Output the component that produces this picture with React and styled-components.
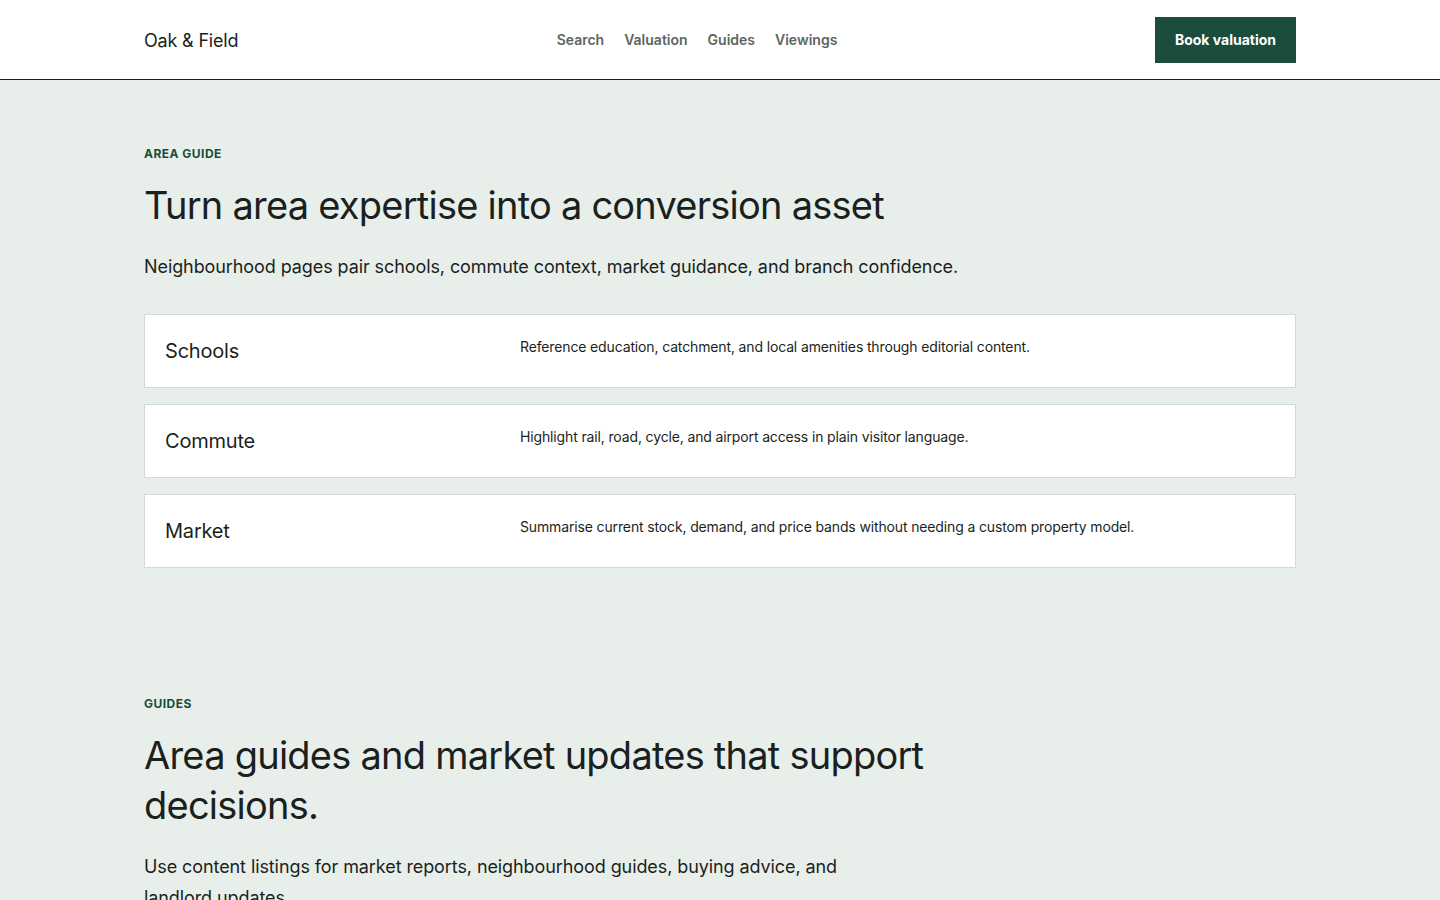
import React from "react";
import styled, { createGlobalStyle } from "styled-components";

const Global = createGlobalStyle`
  body { margin: 0; font-family: Inter, "Noto Sans", sans-serif; background: #e8efeb; color: #1b1f1d; }
`;
const Header = styled.header`
  background: #fff; border-bottom: 1px solid #1b1f1d; height: 79px;
`;
const Wrap = styled.div`
  width: 1152px; margin: 0 auto; box-sizing: border-box;
`;
const HeaderInner = styled(Wrap)`
  height: 100%; display: grid; grid-template-columns: 1fr auto 1fr; align-items: center;
`;
const Logo = styled.div` font-size: 18px; color: #1b1f1d; letter-spacing: -0.01em; margin-top: 2px; `;
const Nav = styled.nav` display: flex; gap: 20px; margin-right: 46px; `;
const NavLink = styled.a`
  font-size: 14px; font-weight: 600; color: #5d6661; text-decoration: none;
`;
const Button = styled.a`
  justify-self: end; background: #1a4d3c; color: #fff; font-size: 14px; font-weight: 700;
  height: 46px; padding: 0 20px; display: flex; align-items: center; text-decoration: none;
`;
const Section = styled.section` padding: 66px 0 62px; `;
const Eyebrow = styled.div`
  font-size: 12px; font-weight: 700; letter-spacing: 0.04em; color: #1a4d3c; line-height: 16px;
  text-transform: uppercase;
`;
const Heading = styled.h2`
  margin: 18px 0 0; font-size: 38px; font-weight: 400; line-height: 50px; letter-spacing: -0.02em;
  max-width: ${p => p.$max || "none"};
`;
const Lead = styled.p`
  margin: 21px 0 0; font-size: 18px; line-height: 31px; letter-spacing: -0.005em; max-width: ${p => p.$max || "none"};
`;
const Cards = styled.div` display: flex; flex-direction: column; gap: 16px; margin-top: 32px; `;
const Card = styled.div`
  background: #fff; border: 1px solid #d3dbd7; padding: 22px 20px;
  display: grid; grid-template-columns: 331px 1fr; gap: 24px; align-items: start;
`;
const CardTitle = styled.h3` margin: 0; font-size: 20px; font-weight: 400; line-height: 28px; letter-spacing: -0.01em; `;
const CardText = styled.p` margin: 0; font-size: 14px; line-height: 20px; letter-spacing: -0.01em; `;

const items = [
  ["Schools", "Reference education, catchment, and local amenities through editorial content."],
  ["Commute", "Highlight rail, road, cycle, and airport access in plain visitor language."],
  ["Market", "Summarise current stock, demand, and price bands without needing a custom property model."],
];

export default function App() {
  return (
    <>
      <Global />
      <Header>
        <HeaderInner>
          <Logo>Oak &amp; Field</Logo>
          <Nav>
            {["Search", "Valuation", "Guides", "Viewings"].map(n => <NavLink key={n} href="#">{n}</NavLink>)}
          </Nav>
          <Button href="#">Book valuation</Button>
        </HeaderInner>
      </Header>
      <Section>
        <Wrap>
          <Eyebrow>Area guide</Eyebrow>
          <Heading>Turn area expertise into a conversion asset</Heading>
          <Lead>Neighbourhood pages pair schools, commute context, market guidance, and branch confidence.</Lead>
          <Cards>
            {items.map(([t, d]) => (
              <Card key={t}><CardTitle>{t}</CardTitle><CardText>{d}</CardText></Card>
            ))}
          </Cards>
        </Wrap>
      </Section>
      <Section>
        <Wrap>
          <Eyebrow>Guides</Eyebrow>
          <Heading $max="800px">Area guides and market updates that support decisions.</Heading>
          <Lead $max="720px">Use content listings for market reports, neighbourhood guides, buying advice, and landlord updates.</Lead>
        </Wrap>
      </Section>
    </>
  );
}
